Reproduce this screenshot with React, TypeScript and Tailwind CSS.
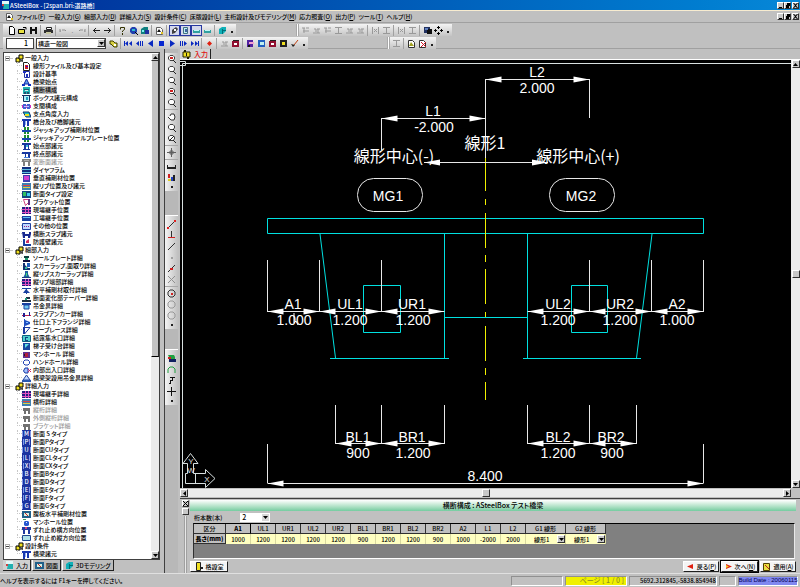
import React from "react";

type Shape = [d: string, fill: string, stroke?: string];

const icons: Record<string, Shape[]> = {
  folder: [["M1 4h4v4h-4z", "#f0e020", "#000"], ["M4 1h4v4h-4z", "#f0e020", "#000"], ["M4 7l4-2v3z", "#404040"]],
  fileRed: [["M1.5 .5h4l2 2v6h-6z", "#fff", "#202020"], ["M3 3h3v4h-3z", "#d02020"], ["M4 4h2v1h-2z", "#40c"]],
  doc: [["M2.5 1.5h5v6h-5z", "#fff", "#2030a0"], ["M1 1h3v2h-3zM4 4h2v3h-2z", "#2030c0"]],
  bell: [["M4.5 1L7 6H2z", "#60a0f0", "#1020a0"], ["M0 6h3v2h-3zM6 6h3v2h-3z", "#1030c0"]],
  section: [["M1 1h7v7h-7z", "#20b0b0"], ["M2 3h5v1h-5zM2 6h2v2h-2zM5 6h2v2h-2z", "#205070"], ["M3 4h3v1h-3z", "#d0f0f0"]],
  frame: [["M1.5 1.5h6v6h-6z", "#b0f0f8", "#103060"], ["M0 1h9v1h-9z", "#103060"], ["M4 3h2v3h-2z", "#20a0c0"]],
  span: [["M0 3h9v3h-9z", "#d030c0"], ["M1 2h3v5h-3zM5 2h3v5h-3z", "#4060d0"], ["M2 4h5v1h-5z", "#c0c0ff"]],
  angle: [["M1 2h6l2 5h-5z", "#20c0c0", "#103070"], ["M3 4h4v2h-4z", "#f0e020"]],
  pier: [["M0 1h9v2h-9zM1 3h2v6h-2zM5 3h2v5h-2z", "#1838b0"], ["M3 3h1v4h-1z", "#90b0f0"]],
  jack: [["M2 1h2v7h-2zM5 1h2v7h-2z", "#209030"], ["M0 4h9v2h-9z", "#1848b0"]],
  start: [["M0 1h9v2h-9zM2 3h2v4h-2zM6 3h1v4h-1zM1 7h7v1h-7z", "#1838a0"], ["M4 3h2v2h-2z", "#40c0e0"]],
  end: [["M0 2h9v2h-9zM3 4h1v4h-1zM6 4h2v4h-2z", "#1838a0"], ["M2 7h5v1h-5z", "#4080e0"]],
  grayPier: [["M0 1h9v3h-9zM1 4h2v4h-2zM6 4h2v4h-2z", "#808080"], ["M2 2h5v1h-5z", "#b0b0b0"]],
  dia: [["M0 1h9v7h-9z", "#103080"], ["M0 3h9v1h-9zM0 6h9v1h-9z", "#60c0e0"]],
  magenta: [["M1 1h7v7h-7z", "#4040b0"], ["M2 2h5v4h-5z", "#d040d0"]],
  stripes: [["M0 1h9v7h-9z", "#4080b0"], ["M1 3h7v1h-7z", "#e04040"], ["M1 5h7v1h-7z", "#e0d040"]],
  type: [["M0 1h9v7h-9z", "#104880"], ["M1 2h3v4h-3z", "#30c060"], ["M5 3h3v3h-3z", "#40d0f0"]],
  bracket: [["M1.5 1.5h5v3l-3 3z", "#fff", "#d04080"], ["M6 1h2v6h-2z", "#603080"]],
  grid: [["M0 1h9v7h-9z", "#202080"], ["M3 1h1v7h-1zM6 1h1v7h-1zM0 3h9v1h-9zM0 6h9v1h-9z", "#e050c0"]],
  bar: [["M0 2h9v5h-9z", "#1840a0"], ["M1 3h7v1h-7z", "#60c0f0"]],
  dots: [["M.5 1.5h8v6h-8z", "#c0d8ff", "#2040a0"], ["M2 4h1v1h-1zM4 4h1v1h-1zM6 4h1v1h-1z", "#a02080"]],
  slab: [["M0 2h3v2h4v-2h2v2l-1 4h-2v-2h-3v2h-2z", "#182890"]],
  wall: [["M1 1h2v5h6v2h-8z", "#1840a0"], ["M4 3l3-2v4h-3z", "#d03060"]],
  sole: [["M2 2h5v2h-5z", "#104040"], ["M3 4h3v2h-3z", "#20a070"], ["M1 6h7v2h-7z", "#101040"]],
  scallop: [["M1 1h2v2l3 3h2v2h-7z", "#103070"], ["M5 1h3v4h-3z", "#2060c0"], ["M3 5h2v2h-2z", "#30c0a0"]],
  rib: [["M3 1h3v3l2 4h-7l2-4z", "#2060a0"], ["M4 3h1v3h-1z", "#40e070"], ["M0 7h9v1h-9z", "#204080"]],
  horiz: [["M0 2h9v1h-9zM4 3h1v5h-1zM1 7l3-4 4 4z", "#1840a0"]],
  taper: [["M0 6h9v2h-9zM4 3h4v2h-4z", "#203040"], ["M3 4h2v2h-2z", "#20a080"]],
  hang: [["M0 1h9v2h-9z", "#1840a0"], ["M2 3h5v4h-5z", "#70c8f0", "#1840a0"]],
  anchor: [["M0 5h9v1h-9z", "#c02050"], ["M1 3h2v4h-2zM7 2h1v4h-1z", "#202090"]],
  flange: [["M2 1h1v8h-1zM3 2l5 2v2l-5 2z", "#2050c0"], ["M4 4h2v1h-2z", "#80c0ff"]],
  knee: [["M2 1.5h6L2.5 8z", "#fff", "#1838a0"], ["M1 1h2v7h-2z", "#1838a0"]],
  drain: [["M.5 1.5h8v6h-8z", "#50d0d0", "#106080"], ["M3 3h3v1h-2v2h2v1h-3z", "#104080"]],
  ladder: [["M1 1h7v7h-7z", "#1848a0"], ["M3 2h4l-4 4z", "#60e0e0"]],
  manhole: [["M1 2h7v6h-7z", "#603090"], ["M3 3h3v4h-3z", "#b02040"], ["M2 4h1v2h-1z", "#202020"]],
  ring: [["M3 2h3l1.5 1.5v2L6 7H3L1.5 5.500v-2z", "#fff", "#1838b0"]],
  exit: [["M3 2h3v5h-3l-1.500-2z", "#a0c0ff", "#1838a0"], ["M6 3l3 3M9 3L6 6", "none", "#d02060"]],
  crane: [["M4.500 1L8 6H1z", "#c0d8ff", "#2040a0"], ["M0 6h9v2h-9z", "#2858b0"]],
  grayBox: [["M1 2h7v3h-7zM2 5h2v3h-2zM6 5h2v3h-2z", "#707070"]],
  web: [["M0 1h9v7h-9z", "#20608a"], ["M2 3h5v3h-5z", "#d8f0e0"], ["M3 3l3 3", "none", "#d02020"]],
  ball: [["M3 3h3l1 1v3l-1 1h-3l-1-1v-3z", "#2858d0"], ["M4 4h1v1h-1z", "#e0f0ff"], ["M1 1h3v1h-3z", "#40a060"]],
  stopH: [["M0 1h9v3h-9zM1 4h2v4h-2zM6 4h2v4h-2z", "#2038a0"], ["M3 1h2v2h-2z", "#d04080"]],
  stopV: [["M.5 1.500h8v5h-8z", "#b0e0e8", "#204890"]],
  new: [["M2.500 .5h3l2 2v6h-5z", "#fff", "#000"]],
  open: [["M.5 3.500h6v4h-6z", "#e8e040", "#000"], ["M5 1.500h3v2", "none", "#000"]],
  save: [["M1 1h7v7h-7z", "#101010"], ["M3 1h3v2h-3zM3 5h3v3h-3z", "#d8d8d8"]],
  print: [["M2.500 1.500h5v2h-5z", "#fff", "#202020"], ["M0 4h9v3h-9z", "#303030"], ["M2 6h5v2h-5z", "#c8c8a0"]],
  undo: [["M1 5h1M1 3v3M3 4h3l1 1", "none", "#909090"]],
  redo: [["M8 5h-1M8 3v3M6 4h-3l-1 1", "none", "#909090"]],
  left: [["M1 4.500h7M4 2L1.500 4.500L4 7", "none", "#202020"]],
  right: [["M8 4.500h-7M5 2l2.500 2.500L5 7", "none", "#202020"]],
  help: [["M2.500 3.500v-2h4v2l-2 1.500v1", "none", "#303000"], ["M4 7h1v2h-1z", "#303000"]],
  globe: [["M3 1h3l2 2v3l-2 2h-3l-2-2v-3z", "#2040b0"], ["M3 3h3v2h-3z", "#30c0d0"], ["M6 6l3 3", "none", "#000"]],
  teal: [["M1 3l3-2h4v5l-3 2h-4z", "#108080"], ["M5 4h4v4h-4z", "#2030a0"], ["M2 4h2v2h-2z", "#80f0f0"]],
  page: [["M1.500 1.500h4l2 2v5h-6z", "#fff", "#606060"], ["M4 3l2 3h-4z", "#101010"], ["M6 6h2v2h-2z", "#e0c020"]],
  pen: [["M2 4l4-3 2 2-3 4-3 1z", "#404040"], ["M4 3h2v2h-2z", "#fff"]],
  sheet: [["M2.500 1.500h4v6h-4z", "#c0f0f0", "#407080"], ["M4 3h2v3h-2z", "#4060a0"]],
  tealBar: [["M1 4h7v3h-7z", "#30a0a0"], ["M2 4h5v1h-5z", "#c0f8f8"]],
  cube: [["M1 3l3-2h4v4l-3 3h-4z", "#10b0b8"], ["M5 4h3v1h-3zM4 3h1v5h-1z", "#007078"]],
  gA: [["M1 2h3M5 2h3M2 5h6M3 2v5", "none", "#999"]],
  gB: [["M1 7h7M2 3h2v3M6 3v4M5 3h3", "none", "#999"]],
  gC: [["M1.500 1v7M7.500 1v7M3 3l3 3M6 3L3 6", "none", "#999"]],
  gD: [["M1 1.500h7M1 7.500h7M4.500 2v5", "none", "#999"]],
  layers: [["M1 1h6v6h-6z", "#203060"], ["M4 3h5v5h-5z", "#101010"], ["M2 2h3v2h-3z", "#6080c0"]],
  move: [["M4 0h1v3h-1zM4 6h1v3h-1zM0 4h3v1h-3zM6 4h3v1h-3z", "#000"], ["M3 1h3v1h-3zM3 7h3v1h-3zM1 3h1v3h-1zM7 3h1v3h-1z", "#000"]],
  yellowObj: [["M1 2h3l2 2h2v4h-3l-3-3h-1z", "#d8d040", "#404000"], ["M5 5h2v2h-2z", "#fff"]],
  first: [["M0 2h1v5h-1zM4 2v5L1 4.500zM8 2v5L5 4.500z", "#0828c0"]],
  prevS: [["M4 2v5L1 4.500zM5 2h1v5h-1zM7 2h1v5h-1z", "#0828c0"]],
  prev: [["M7 1v7L2 4.500z", "#0828c0"]],
  stop: [["M2 2h5v5h-5z", "#0828d0"]],
  next: [["M2 1v7L7 4.500z", "#0828c0"]],
  nextS: [["M1 2h1v5h-1zM3 2h1v5h-1zM5 2v5L8 4.500z", "#0828c0"]],
  last: [["M8 2h1v5h-1zM1 2v5L4 4.500zM5 2v5L8 4.500z", "#0828c0"]],
  rec: [["M4.500 2L7 4.500L4.500 7L2 4.500z", "#e02010"]],
  redBox: [["M1 2h7v6h-7z", "#901030"], ["M3 4h3v2h-3z", "#fff"], ["M2 1h6v1h-6z", "#202020"]],
  purple: [["M1 1h6v7h-6z", "#5020a0"], ["M3 3h5v2h-5z", "#f0a0d0"], ["M2 6h2v2h-2z", "#101010"]],
  blueBox: [["M1 1h7v7h-7z", "#2060c0"], ["M3 3h4v3h-4z", "#c0f0f0"]],
  yelBox: [["M1 1h7v7h-7z", "#202020"], ["M3 3h3v3h-3z", "#f0e020"]],
  tab: [["M1 2h7v5h-7z", "#f0e020", "#202000"], ["M2 0h2v2h-2zM5 7h2v2h-2zM4 3h1v3h-1z", "#202000"]],
  broom: [["M8 1L4 6", "none", "#c04010"], ["M1 5l2 3 2-2z", "#202020"]],
  warn: [["M1.500 1.500h4l2 2v5h-6z", "#fff", "#303030"], ["M4 3l3 4h-5z", "#a0a020"]],
  redX: [["M1.500 1.500h4l2 2v5h-6z", "#fff", "#303030"], ["M3 3l5 5M8 3L3 8", "none", "#d01020"]],
  zoomR: [["M3 1.500h3l1.500 1.500v2l-1.500 1.500h-3l-1.500-1.500v-2z", "#fff", "#404040"], ["M6 6l3 3", "none", "#202020"], ["M3 3h3v2h-3z", "#d02020"]],
  zoom: [["M3 1.500h3l1.500 1.500v2l-1.500 1.500h-3l-1.500-1.500v-2z", "#fff", "#404040"], ["M6 6l3 3", "none", "#202020"]],
  zoomK: [["M3 1.500h3l1.500 1.500v2l-1.500 1.500h-3l-1.500-1.500v-2z", "#fff", "#404040"], ["M6 6l3 3M2 7l5-5", "none", "#202020"]],
  hand: [["M3 4l1-2h3l1 3-1 3h-3l-3-3", "#fff", "#303030"]],
  pan: [["M4.500 0v9M0 4.500h9M3 3h3v3h-3z", "none", "#606060"]],
  ruler: [["M0 5h9v2h-9zM0 3h1v2h-1zM8 3h1v2h-1z", "#202020"]],
  colors: [["M1 1h2v4h-2z", "#d02020"], ["M1 6h3v2h-3z", "#e0d020"], ["M4 4h2v4h-2z", "#2040c0"], ["M6 2h2v6h-2z", "#202020"]],
  line: [["M2 7L7 2", "none", "#303030"], ["M0 7h2v2h-2zM7 0h2v2h-2z", "#e02020"]],
  perp: [["M4.500 0v7", "none", "#303030"], ["M1 6h7v1h-7z", "#d02020"]],
  lineB: [["M1 8L8 1", "none", "#303030"]],
  dim: [["M4 4h2v2h-2z", "#a0a0a0"]],
  lineR: [["M1 8L8 1", "none", "#303030"], ["M3 4h3v2h-3z", "#d02020"]],
  cross: [["M1 1l7 7M8 1L1 8", "none", "#909090"]],
  circR: [["M3 1h3l2 2v3l-2 2h-3l-2-2v-3z", "none", "#303030"], ["M4 4h2v2h-2z", "#d02020"]],
  circ: [["M3 1h3l2 2v3l-2 2h-3l-2-2v-3z", "none", "#989898"]],
  stack: [["M1 1h6l1 2h-6z", "#20a040"], ["M1 3h6v2h-6z", "#d02020"], ["M2 5h7v3h-7z", "#102060"], ["M4 3h4v2h-4z", "#20a040"]],
  arc: [["M1 8V4l2-2h3l2 2v4", "none", "#20a040"]],
  func: [["M3 1h5v1h-2v3h-2v3h-2v-1h1v-3h2v-2h-2z", "#101010"]],
  plus: [["M4.500 0v9M0 4.500h9", "none", "#101010"]],
  door: [["M2.500 .5h4v8h-4z", "#f0e020", "#202020"], ["M6 5h3v2h-3z", "#202020"]],
  apply: [["M1.500 1.500h6v7h-6z", "#e8e040", "#504000"], ["M3 3l4 4", "none", "#c02020"]],
  back: [["M7 2v5L1 4.500z", "#e02010"]],
  fwd: [["M2 2v5L8 4.500z", "#e02010"], ["M2 3v3L5 4.500z", "#f0c020"]],
  app: [["M1 0h7v3h-7z", "#e0f8f8"], ["M3 3h5v5h-6z", "#20b0b0"], ["M1 3h2v2h-2z", "#d04040"]],
};

function Icon({ name }: { name: string }) {
  return (
    <svg viewBox="0 0 9 9" className="block h-[9px] w-[9px] shrink-0" aria-hidden="true">
      {icons[name].map(([d, fill, stroke], i) => (
        <path key={i} d={d} fill={fill} stroke={stroke ?? "none"} />
      ))}
    </svg>
  );
}

function LetterIcon({ letter }: { letter: string }) {
  return (
    <span className="flex h-[8px] w-[9px] shrink-0 items-center justify-center bg-[#1c34a0] text-[6px] leading-none text-white" aria-hidden="true">
      <span className="border-x border-[#8098e8] px-px">{letter}</span>
    </span>
  );
}

function Arrow({ dir }: { dir: "up" | "down" | "left" | "right" }) {
  const d = { up: "M2.500 1L5 4H0z", down: "M0 1h5L2.500 4z", left: "M4 0v5L1 2.500z", right: "M1 0v5L4 2.500z" }[dir];
  return (
    <svg viewBox="0 0 5 5" className="block h-[5px] w-[5px]" aria-hidden="true">
      <path d={d} fill="#000" />
    </svg>
  );
}

const bevel = "border border-t-white border-l-white border-r-[#303030] border-b-[#303030] bg-[#c8c8c8]";

function ScrollButton({ dir }: { dir: "up" | "down" | "left" | "right" }) {
  return (
    <button aria-label={"scroll " + dir} className={"flex h-[8px] w-[8px] shrink-0 items-center justify-center " + bevel}>
      <Arrow dir={dir} />
    </button>
  );
}

type Item = [icon: string, label: string, state?: "off" | "selected"];
const tree: { label: string; items: Item[] }[] = [
  {
    label: "一般入力",
    items: [
      ["fileRed", "線形ファイル及び基本設定"], ["doc", "設計基準"], ["bell", "橋梁始点"], ["section", "横断構成", "selected"],
      ["frame", "ボックス諸元構成"], ["span", "支間構成"], ["angle", "支点角度入力"], ["pier", "橋台及び橋脚諸元"],
      ["jack", "ジャッキアップ補剛材位置"], ["jack", "ジャッキアップソールプレート位置"], ["start", "始点部諸元"], ["end", "終点部諸元"],
      ["grayPier", "変断面諸元", "off"], ["dia", "ダイヤフラム"], ["magenta", "垂直補剛材位置"], ["stripes", "縦リブ位置及び諸元"],
      ["type", "断面タイプ設定"], ["bracket", "ブラケット位置"], ["grid", "現場継手位置"], ["bar", "工場継手位置"],
      ["dots", "その他の位置"], ["slab", "横断スラブ諸元"], ["wall", "防護壁諸元"],
    ],
  },
  {
    label: "細部入力",
    items: [
      ["sole", "ソールプレート詳細"], ["scallop", "スカーラップ,面取り詳細"], ["rib", "縦リブスカーラップ詳細"], ["grid", "縦リブ端部詳細"],
      ["horiz", "水平補剛材取付詳細"], ["taper", "断面変化部テーパー詳細"], ["hang", "吊金具詳細"], ["anchor", "スラブアンカー詳細"],
      ["flange", "仕口上下フランジ詳細"], ["knee", "ニーブレース詳細"], ["drain", "結露集水口詳細"], ["ladder", "梯子受け台詳細"],
      ["manhole", "マンホール 詳細"], ["ring", "ハンドホール詳細"], ["exit", "内部出入口詳細"], ["crane", "横梁架設用吊金具詳細"],
    ],
  },
  {
    label: "詳細入力",
    items: [
      ["grid", "現場継手詳細"], ["stripes", "横桁詳細"], ["grayBox", "縦桁詳細", "off"], ["grayBox", "外側縦桁詳細", "off"],
      ["grayBox", "ブラケット詳細", "off"], ["@M", "断面 S タイプ"], ["@P", "断面Pタイプ"], ["@U", "断面CUタイプ"], ["@L", "断面CLタイプ"],
      ["@X", "断面CXタイプ"], ["@B", "断面Bタイプ"], ["@D", "断面Dタイプ"], ["@E", "断面Eタイプ"], ["@F", "断面Fタイプ"], ["@G", "断面Gタイプ"],
      ["web", "腹板水平補剛材位置"], ["ball", "マンホール位置"], ["stopH", "ずれ止め横方向位置"], ["stopV", "ずれ止め縦方向位置"],
    ],
  },
  { label: "設計条件", items: [["pier", "横梁諸元"]] },
];

function TreeItem({ item: [icon, label, state] }: { item: Item }) {
  return (
    <li className="flex h-[8px] items-center">
      <span className="ml-[3px] h-[8px] w-[10px]" />
      <span className="h-[4px] w-[5px] self-start border-b border-l border-dotted border-[#c8c8c8]" />
      {icon[0] === "@" ? <LetterIcon letter={icon[1]} /> : <Icon name={icon} />}
      <button
        className={
          "ml-[2px] h-[8px] whitespace-nowrap leading-[8px] " +
          (state === "selected" ? "bg-[#c4c4c4]" : state === "off" ? "text-[#989898]" : "")
        }
      >
        {label}
      </button>
    </li>
  );
}

function Sidebar() {
  return (
    <aside className="flex w-[165px] shrink-0 flex-col border-r border-[#404040] pl-[3px] pt-[3px]">
      <div className="mr-[4px] flex min-h-0 flex-1 border border-[#404040] bg-white">
        <ul className="min-w-0 flex-1 overflow-hidden pt-px">
          {tree.map((group) => (
            <li key={group.label}>
              <div className="flex h-[8px] items-center">
                <button aria-label={"collapse " + group.label} className="ml-px flex h-[5px] w-[5px] items-center border border-[#b0b0b0] bg-white">
                  <span className="h-px w-[3px] bg-[#404040]" />
                </button>
                <span className="mr-[2px] h-px w-[3px] bg-[#c8c8c8]" />
                <Icon name="folder" />
                <span className="ml-px whitespace-nowrap leading-[8px]">{group.label}</span>
              </div>
              <ul>
                {group.items.map((item) => (
                  <TreeItem key={item[1]} item={item} />
                ))}
              </ul>
            </li>
          ))}
        </ul>
        <div className="flex w-[8px] shrink-0 flex-col bg-[#ececec]">
          <ScrollButton dir="up" />
          <div className="h-[296px] border-b border-r border-b-black border-r-[#303030] border-l border-l-white bg-[#c4c4c4]" />
          <div className="flex-1" />
          <ScrollButton dir="down" />
        </div>
      </div>
      <div className="flex h-[13px] shrink-0 items-start gap-px" role="tablist">
        {[["app", "入力"], ["web", "図面"], ["cube", "3Dモデリング"]].map(([icon, label], i) => (
          <button
            key={label}
            role="tab"
            aria-selected={i === 0}
            className={
              "flex h-[11px] items-center gap-[2px] whitespace-nowrap border-b border-r border-[#202020] px-[2px] leading-[9px] " +
              (i === 0 ? "bg-[#d0d0d0]" : "border-l border-l-white bg-[#bcbcbc]")
            }
          >
            <Icon name={icon} />
            {label}
          </button>
        ))}
      </div>
    </aside>
  );
}

const menus: [string, string][] = [
  ["ファイル", "F"], ["一般入力", "G"], ["細部入力", "D"], ["詳細入力", "S"], ["設計条件", "C"], ["床版設計", "L"],
  ["主桁設計及びモデリング", "M"], ["応力照査", "O"], ["出力", "P"], ["ツール", "T"], ["ヘルプ", "H"],
];

function WindowButtons() {
  return (
    <div className="flex h-[7px] items-center">
      {["M1 4h3v1h-3z", "M2 0h3v3h-1v2h-3v-3h1z", "M0 0h1l1.500 1.500L4 0h1L3 2.500L5 5H4L2.500 3.500L1 5H0L2 2.500z"].map((d, i) => (
        <button key={d} aria-label={["minimize", "restore", "close"][i]} className={"flex h-[7px] w-[7px] items-center justify-center " + bevel + (i === 2 ? " ml-px" : "")}>
          <svg viewBox="0 0 5 5" className="h-[5px] w-[5px]"><path d={d} fill="#000" /></svg>
        </button>
      ))}
    </div>
  );
}

/* "|" is a separator, "." an overflow mark, "*" a pressed button. */
function Tools({ names, vertical = false }: { names: string[]; vertical?: boolean }) {
  return (
    <>
      {names.map((n, i) => {
        if (n === "|")
          return vertical ? (
            <span key={i} className="my-px h-px w-full bg-[#a8a8a8]" />
          ) : (
            <span key={i} className="ml-px mr-[2px] h-[11px] w-px bg-[#a0a0a0]" />
          );
        if (n === ".")
          return (
            <span key={i} className={vertical ? "flex h-[8px] items-center" : "flex h-full w-[8px] items-end justify-center pb-[3px]"}>
              <span className="h-[2px] w-[2px] bg-[#202020]" />
            </span>
          );
        const on = n[0] === "*";
        const name = on ? n.slice(1) : n;
        return (
          <button key={i} aria-label={name} className={"flex h-[11px] w-[11px] shrink-0 items-center justify-center " + (on ? "border border-[#2838a0] bg-[#d4d8ec]" : "")}>
            <Icon name={name} />
          </button>
        );
      })}
    </>
  );
}

const strip = "flex h-[12px] items-center bg-linear-to-b from-[#f4f4f4] to-[#c4c4c4]";

function Toolbars() {
  return (
    <div className="flex h-[27px] shrink-0 flex-col gap-px border-y border-[#a0a0a0] pl-[3px] pt-px">
      <div className="flex">
        <div className={strip}>
          <span className="w-[3px]" />
          <Tools names={["new", "open", "save", "|", "print", "|", "undo"]} />
          <span className="flex w-[7px] justify-center text-[#909090]">.</span>
          <Tools names={["redo", "|", "left", "right", "|", "help", "globe", "teal", "|", "page", "|", "*pen", "*sheet", "*tealBar", "tealBar", "|", "cube", "."]} />
        </div>
        <div className={strip + " ml-[60px]"}>
          <span className="mr-px h-[12px] w-[3px] border-x border-[#a8a8a8] bg-white" />
          <Tools names={["gA", "gB", "gA", "gD", "gB", "gB", "|", "gC", "gD", "|", "gC", "gD", "|", "layers", "move", "."]} />
        </div>
      </div>
      <div className="flex">
        <div className={strip}>
          <input aria-label="図面番号" defaultValue="1" className="ml-[3px] h-[11px] w-[28px] border border-[#404040] bg-white px-[5px] text-right text-[7px] leading-[9px]" />
          <div className="ml-[2px] mr-[2px] flex h-[11px] w-[70px] items-center border border-[#404040] bg-white">
            <select aria-label="図面種類" className="h-[9px] min-w-0 flex-1 appearance-none pl-px leading-[9px]">
              <option>構造一般図</option>
            </select>
            <ScrollButton dir="down" />
          </div>
          <Tools names={["yellowObj", "|", "first", "prevS", "prev", "stop", "next", "nextS", "last", "|", "rec", "|", "gB", "redBox", "|", "purple", "blueBox", "redBox", "yelBox", "broom", "."]} />
        </div>
        <div className={strip + " ml-[79px]"}>
          <span className="mr-px h-[12px] w-[3px] border-x border-[#a8a8a8] bg-white" />
          <Tools names={["gD", "|", "warn", "redX", "."]} />
        </div>
      </div>
    </div>
  );
}

function SideTools() {
  const part = "flex flex-col items-center bg-linear-to-r from-[#f4f4f4] to-[#c0c0c0]";
  return (
    <div className="flex w-[13px] shrink-0 flex-col bg-[#b8b8b8] pt-[4px]">
      <div className={part}>
        <Tools vertical names={["zoomR", "zoom", "zoom", "zoomR", "zoom", "|", "hand", "zoom", "zoomK", "|", "pan", "|", "ruler", "colors", "."]} />
      </div>
      <div className={part + " mt-[24px] border-t border-white pt-[3px]"}>
        <Tools vertical names={["line", "perp", "lineB", "dim", "lineR", "cross", "|", "circR", "circ", "circ", "."]} />
      </div>
      <div className={part + " mt-[20px] border-t border-white pt-[3px]"}>
        <Tools vertical names={["stack", "arc", "func", "plus", "."]} />
      </div>
    </div>
  );
}

function Dim({ x1, x2, y, len = 16 }: { x1: number; x2: number; y: number; len?: number }) {
  return (
    <g fill="#fff" stroke="none">
      <path d={`M${x1} ${y}H${x2}`} stroke="#e8e8e8" />
      <path d={`M${x1} ${y}l${len}-3v6zM${x2} ${y}l${-len}-3v6z`} />
    </g>
  );
}

const notes: [number, number, string][] = [
  [537, 77, "L2"], [537, 93, "2.000"], [433, 116, "L1"], [434, 132, "-2.000"],
  [293, 309, "A1"], [294, 325, "1.000"], [350, 309, "UL1"], [350, 325, "1.200"], [412, 309, "UR1"], [413, 325, "1.200"],
  [558, 309, "UL2"], [558, 325, "1.200"], [620, 309, "UR2"], [620, 325, "1.200"], [677, 309, "A2"], [677, 325, "1.000"],
  [358, 442, "BL1"], [358, 458, "900"], [412, 442, "BR1"], [413, 458, "1.200"], [558, 442, "BL2"], [558, 458, "1.200"],
  [611, 442, "BR2"], [612, 458, "900"], [388, 201, "MG1"], [581, 201, "MG2"], [485, 481, "8.400"],
];

function Drawing() {
  return (
    <svg viewBox="180 60 611 428" className="block min-h-0 min-w-0 flex-1 bg-black font-normal" role="img" aria-label="横断構成">
      <g fill="none" stroke="#d8e0e0">
        <path d="M182.500 63.500H791M182.500 63.500V488M180 61.500h5.500v4h-5.500" />
        <path d="M187.500 473.500V463.500H183l7.500-10 7.500 10h-4.500v10H205.500v-4l9.500 9-9.500 9v-4H185.500v-10zM195.500 473.500v10" />
      </g>
      <g fill="#e0e0e0" textAnchor="middle" className="font-['Liberation_Sans',sans-serif] text-[8px]">
        <text x="191" y="464">Y</text>
        <text x="191" y="473">W</text>
        <text x="207" y="482">X</text>
      </g>
      <g fill="none" stroke="#00e0e0">
        <path d="M267.500 218.500h436v15h-436z" />
        <path d="M320 234L335.500 358M444.500 234v124M330 358.500h119M444 317.500h83M527.500 234v124M652 234L636.500 358M523 358.500h118" />
        <path d="M363.500 285.500h37v47h-37zM571.500 285.500h36v47h-36z" />
      </g>
      <g fill="none" stroke="#e8e8e8">
        <path d="M485.500 79v79M589.500 79v39M381.500 118v32" />
        <path d="M267.500 260v52M319.500 260v52M381.500 260v52M589.500 260v52M651.500 260v52M703.500 260v52" />
        <path d="M335.500 405v39M381.500 405v39M444.500 405v39M527.500 405v39M589.500 405v39M636.500 405v39M267.500 444v39M703.500 444v39" />
        <rect x="357.500" y="178.500" width="65" height="33" rx="16" />
        <rect x="549.500" y="178.500" width="65" height="33" rx="16" />
      </g>
      <path
        d="M485.500 158V191M485.500 199V205M485.500 213V248M485.500 255V262M485.500 269V304M485.500 312V317M485.500 326V361M485.500 368V375M485.500 382V400"
        stroke="#f0f000"
      />
      <Dim x1={485.5} x2={589.5} y={79.5} />
      <Dim x1={381.5} x2={485.5} y={118.5} />
      <Dim x1={424} x2={548} y={162.5} />
      <Dim x1={267.5} x2={319.5} y={311.5} />
      <Dim x1={319.5} x2={381.5} y={311.5} />
      <Dim x1={381.5} x2={444.5} y={311.5} />
      <Dim x1={527.5} x2={589.5} y={311.5} />
      <Dim x1={589.5} x2={651.5} y={311.5} />
      <Dim x1={651.5} x2={703.5} y={311.5} />
      <Dim x1={335.5} x2={381.5} y={443.5} />
      <Dim x1={381.5} x2={444.5} y={443.5} />
      <Dim x1={527.5} x2={589.5} y={443.5} />
      <Dim x1={589.5} x2={636.5} y={443.5} />
      <Dim x1={267.5} x2={703.5} y={483.5} />
      <g fill="#fff" textAnchor="middle" className="font-['Liberation_Sans',sans-serif] text-[14px]">
        {notes.map(([x, y, s]) => (
          <text key={x + "-" + y} x={x} y={y}>{s}</text>
        ))}
      </g>
      <g fill="#fff" textAnchor="middle" className="text-[16px]">
        <text x="485" y="149">線形1</text>
        <text x="394" y="162">線形中心(-)</text>
        <text x="578" y="162">線形中心(+)</text>
      </g>
      <path d="M294 313v10l2-2 2 4" fill="none" stroke="#fff" />
    </svg>
  );
}

const columns: [string, string][] = [
  ["A1", "1000"], ["UL1", "1200"], ["UR1", "1200"], ["UL2", "1200"], ["UR2", "1200"], ["BL1", "900"],
  ["BR1", "1200"], ["BL2", "1200"], ["BR2", "900"], ["A2", "1000"], ["L1", "-2000"], ["L2", "2000"],
];

function InputPanel() {
  const th = "h-[10px] border-b border-r border-[#303030] bg-[#c0c0c0] p-0 leading-[9px] whitespace-nowrap";
  const td = "h-[10px] border-r border-[#d8d8a0] bg-[#ffffc0] p-0";
  const btn = "flex h-[11px] items-center justify-center gap-[2px] whitespace-nowrap border border-l-white border-t-white border-b-[#202020] border-r-[#202020] bg-[#f4f4f4] leading-[9px]";
  return (
    <section className="flex h-[75px] shrink-0 border-t border-[#404040] pt-px">
      <div className="flex w-[10px] shrink-0 flex-col items-center gap-px">
        <button aria-label="close panel" className={"flex h-[7px] w-[7px] items-center justify-center " + bevel}>
          <svg viewBox="0 0 5 5" className="h-[5px] w-[5px]"><path d="M0 0l5 5M5 0L0 5" stroke="#000" /></svg>
        </button>
        <button aria-label="pin panel" className={"h-[7px] w-[7px] " + bevel} />
        <span className="w-[3px] flex-1 border-x border-x-[#a0a0a0] bg-[#e8e8e8]" />
      </div>
      <div className="flex min-w-0 flex-1 flex-col pr-[4px]">
        <h2 className="h-[11px] shrink-0 bg-linear-to-b from-white to-[#74cca0] text-center text-[7px] leading-[10px] font-medium">
          横断構成 : ASteelBox テスト橋梁
        </h2>
        <div className="flex h-[12px] shrink-0 items-center gap-[18px] pl-[4px]">
          <label htmlFor="girders">桁本数(本)</label>
          <div className="flex h-[9px] w-[30px] items-center bg-white">
            <select id="girders" className="h-[9px] min-w-0 flex-1 appearance-none pl-[2px] text-[7px] leading-[9px]">
              <option>2</option>
            </select>
            <span className="mr-px flex h-[7px] w-[7px] items-center justify-center bg-[#d8d8d8]"><Arrow dir="down" /></span>
          </div>
        </div>
        <div className="ml-[3px] mr-px h-[36px] shrink-0 border border-b-white border-l-[#303030] border-r-[#e8e8e8] border-t-black bg-[#808080]">
          <table className="w-[412px] table-fixed border-separate border-spacing-0 text-center">
            <colgroup>
              <col className="w-[32px]" />
              {columns.map(([n]) => <col key={n} className="w-[25px]" />)}
              <col className="w-[40px]" />
              <col className="w-[40px]" />
            </colgroup>
            <thead>
              <tr>
                <th className={th + " font-medium"}>区分</th>
                {columns.map(([n], i) => <th key={n} className={th + (i === 0 ? " border-r-black font-extrabold" : " font-medium")}>{n}</th>)}
                <th className={th + " font-medium"}>G1 線形</th>
                <th className={th + " font-medium"}>G2 線形</th>
              </tr>
            </thead>
            <tbody>
              <tr>
                <th className={th + " font-extrabold"}>長さ(mm)</th>
                {columns.map(([n, v]) => (
                  <td key={n} className={td}>
                    <input aria-label={n} defaultValue={v} className="block h-[9px] w-full bg-transparent text-center leading-[9px]" />
                  </td>
                ))}
                {["G1", "G2"].map((n) => (
                  <td key={n} className={td}>
                    <div className="flex h-[9px] items-center">
                      <select aria-label={n + " 線形"} className="h-[9px] min-w-0 flex-1 appearance-none pl-[8px] leading-[9px]">
                        <option>線形1</option>
                      </select>
                      <ScrollButton dir="down" />
                    </div>
                  </td>
                ))}
              </tr>
            </tbody>
          </table>
        </div>
        <div className="flex flex-1 items-center gap-[2px]">
          <button className={btn + " mr-auto w-[38px]"}><Icon name="door" />格設室</button>
          <button className={btn + " w-[36px]"}><Icon name="back" /><span>戻る(<u>P</u>)</span></button>
          <button className={btn + " w-[37px] outline outline-black"}><Icon name="fwd" /><span>次へ(<u>N</u>)</span></button>
          <button className={btn + " w-[36px]"}><Icon name="apply" /><span>適用(<u>A</u>)</span></button>
        </div>
      </div>
    </section>
  );
}

function StatusBar() {
  const cell = "flex h-[10px] items-center border border-b-white border-l-[#909090] border-r-white border-t-[#909090] whitespace-nowrap";
  return (
    <footer className="flex h-[14px] shrink-0 items-center gap-[2px] border-t border-[#e0e0e0] pr-[2px]">
      <p className="mr-auto whitespace-nowrap">ヘルプを表示するには F1キーを押してください。</p>
      <div className={cell + " w-[52px]"} />
      <div className={cell + " w-[62px] justify-end bg-[#f0f000] pr-[2px] text-[7px] text-[#909020]"}>ページ [ 1 / 0 ]</div>
      <div className={cell + " w-[88px] justify-between pl-[10px] pr-[3px]"}>
        <span>5692.312845,</span>
        <span>-5838.854948</span>
      </div>
      <div className={cell + " w-[17px]"} />
      <div className={cell + " w-[60px] justify-center bg-[#8088f0] font-['Liberation_Sans',sans-serif] text-[#000050]"}>Build Date : 20060115</div>
    </footer>
  );
}

export default function App() {
  return (
    <div
      lang="ja"
      className="flex h-screen min-h-[587px] flex-col overflow-hidden bg-[#c0c0c0] font-['Noto_Sans_CJK_JP',sans-serif] text-[6px] leading-[9px] font-medium text-black [font-feature-settings:'palt']"
    >
      <header className="flex h-[10px] shrink-0 items-center bg-linear-to-r from-[#002c98] to-[#0888d8] pl-px pr-px">
        <Icon name="app" />
        <h1 className="mr-auto text-[6px] font-medium text-white">ASteelBox - [2span.bri:道路橋]</h1>
        <WindowButtons />
      </header>
      <nav className="flex h-[12px] shrink-0 items-center border-t border-[#f8ecd0] pl-[5px] pr-px">
        <Icon name="page" />
        <div className="ml-[3px] mr-auto flex gap-[3px]">
          {menus.map(([label, key]) => (
            <button key={key} className="whitespace-nowrap leading-[9px]">
              {label}(<u>{key}</u>)
            </button>
          ))}
        </div>
        <WindowButtons />
      </nav>
      <Toolbars />
      <main className="flex min-h-0 flex-1">
        <Sidebar />
        <SideTools />
        <div className="ml-[2px] flex min-w-0 flex-1 flex-col">
          <div className="flex h-[11px] shrink-0 items-start border-b border-white">
            <button className="flex h-[10px] w-[31px] items-center gap-[3px] border-r border-[#202020] bg-[#d4d4d4] pl-[2px] text-[7px] leading-[9px] text-[#e01010]">
              <Icon name="tab" />
              入力
            </button>
          </div>
          <div className="flex min-h-0 flex-1">
            <Drawing />
            <div className="flex w-[9px] shrink-0 flex-col items-center bg-[#ececec]">
              <ScrollButton dir="up" />
              <span className="flex-1" />
              <span className={"h-[8px] w-[8px] " + bevel} />
              <span className="flex-1" />
              <ScrollButton dir="down" />
            </div>
          </div>
          <div className="flex h-[10px] shrink-0 items-center bg-[#c0c0c0] pr-[9px]">
            <ScrollButton dir="left" />
            <div className="flex h-[8px] flex-1 justify-center bg-[#ececec]">
              <span className={"h-[8px] w-[8px] " + bevel} />
            </div>
            <ScrollButton dir="right" />
          </div>
          <InputPanel />
        </div>
      </main>
      <StatusBar />
    </div>
  );
}
